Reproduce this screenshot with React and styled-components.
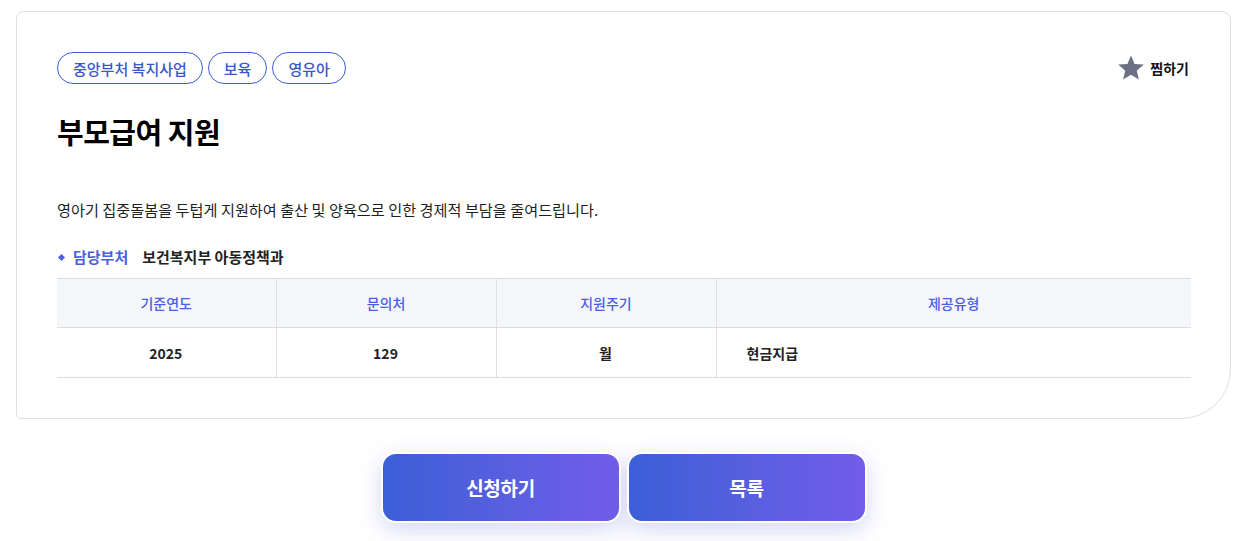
import React from "react";
import styled, { createGlobalStyle } from "styled-components";

const Global = createGlobalStyle`
  html, body { margin: 0; padding: 0; background: #fff; }
  body { font-family: "Noto Sans CJK KR", "Noto Sans", sans-serif; color: #111; }
  * { box-sizing: border-box; }
`;

const Page = styled.div`
  padding: 11px 10px 30px 16px;
  width: 1241px;
`;

const Card = styled.section`
  width: 1215px;
  border: 1px solid #dedede;
  border-radius: 8px 9px 50px 5px;
  padding: 40px 39px 40px 40px;
  background: #fff;
`;

const TopRow = styled.div`
  display: flex;
  justify-content: space-between;
  align-items: center;
`;

const Tags = styled.div`
  display: flex;
  gap: 5px;
`;

const Tag = styled.span`
  display: inline-flex;
  align-items: center;
  height: 32px;
  padding: 0 15px;
  border: 1px solid #3d5ed8;
  border-radius: 16px;
  color: #3a57c9;
  font-size: 15px;
  font-weight: 500;
`;

const Like = styled.button`
  display: flex;
  align-items: center;
  gap: 5px;
  border: 0;
  background: none;
  padding: 0;
  margin-right: 2px;
  font-family: inherit;
  font-size: 14px;
  font-weight: 700;
  color: #111;
  cursor: pointer;
`;

const Title = styled.h1`
  margin: 26px 0 0;
  font-size: 29px;
  font-weight: 700;
  line-height: 42px;
  letter-spacing: -0.5px;
  color: #000;
`;

const Desc = styled.p`
  margin: 46px 0 0;
  font-size: 15.2px;
  line-height: 22px;
  color: #1e1e1e;
`;

const Dept = styled.div`
  margin-top: 26px;
  display: flex;
  align-items: center;
  font-size: 15px;
  font-weight: 700;
  line-height: 22px;
`;

const Diamond = styled.span`
  width: 5px;
  height: 5px;
  background: #4a63dc;
  transform: rotate(45deg);
  margin: 0 9px 0 2px;
`;

const DeptLabel = styled.span`
  color: #4b5fe0;
  margin-right: 14px;
`;

const DeptValue = styled.span`
  color: #222;
`;

const Table = styled.table`
  margin-top: 10px;
  width: 100%;
  border-collapse: collapse;
  table-layout: fixed;
  border-top: 1px solid #dcdcdc;
`;

const Th = styled.th`
  height: 49px;
  background: #f5f6fa;
  color: #4b5fe0;
  font-size: 14px;
  font-weight: 500;
  text-align: center;
  border-bottom: 1px solid #dcdcdc;
  border-left: 1px solid #e0e0e0;
  &:first-child { border-left: 0; }
`;

const Td = styled.td`
  height: 50px;
  font-size: 14px;
  font-weight: 700;
  color: #222;
  text-align: ${(p) => (p.$left ? "left" : "center")};
  padding-left: ${(p) => (p.$left ? "30px" : "0")};
  border-bottom: 1px solid #dcdcdc;
  border-left: 1px solid #e0e0e0;
  &:first-child { border-left: 0; }
`;

const Actions = styled.div`
  width: 1215px;
  display: flex;
  justify-content: center;
  gap: 6px;
  margin-top: 33px;
`;

const ActionButton = styled.button`
  width: 240px;
  height: 71px;
  border: 2.5px solid #fff;
  border-radius: 15px;
  background: linear-gradient(90deg, #3b5fd6 0%, #5a5fe0 55%, #725ce9 100%);
  color: #fff;
  font-family: inherit;
  font-size: 19px;
  font-weight: 700;
  letter-spacing: -0.3px;
  box-shadow: 0 7px 22px rgba(100, 100, 215, 0.26);
  cursor: pointer;
`;

const Star = () => (
  <svg width="28" height="28" viewBox="0 0 24 24" aria-hidden="true">
    <path
      d="M12 1.2l3.05 7.3 7.9.6-6.02 5.15 1.86 7.7L12 17.8l-6.79 4.150 1.86-7.7L1.05 9.1l7.9-.6z"
      fill="#6d6f85"
    />
  </svg>
);

export default function App() {
  return (
    <>
      <Global />
      <Page>
        <Card>
          <TopRow>
            <Tags>
              <Tag>중앙부처 복지사업</Tag>
              <Tag>보육</Tag>
              <Tag>영유아</Tag>
            </Tags>
            <Like>
              <Star />
              찜하기
            </Like>
          </TopRow>
          <Title>부모급여 지원</Title>
          <Desc>영아기 집중돌봄을 두텁게 지원하여 출산 및 양육으로 인한 경제적 부담을 줄여드립니다.</Desc>
          <Dept>
            <Diamond />
            <DeptLabel>담당부처</DeptLabel>
            <DeptValue>보건복지부 아동정책과</DeptValue>
          </Dept>
          <Table>
            <colgroup>
              <col style={{ width: 219 }} />
              <col style={{ width: 220 }} />
              <col style={{ width: 220 }} />
              <col />
            </colgroup>
            <thead>
              <tr>
                <Th>기준연도</Th>
                <Th>문의처</Th>
                <Th>지원주기</Th>
                <Th>제공유형</Th>
              </tr>
            </thead>
            <tbody>
              <tr>
                <Td>2025</Td>
                <Td>129</Td>
                <Td>월</Td>
                <Td $left>현금지급</Td>
              </tr>
            </tbody>
          </Table>
        </Card>
        <Actions>
          <ActionButton>신청하기</ActionButton>
          <ActionButton>목록</ActionButton>
        </Actions>
      </Page>
    </>
  );
}
